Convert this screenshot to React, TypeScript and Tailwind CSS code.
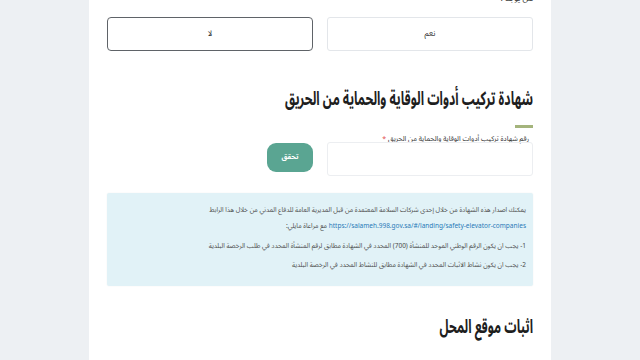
export default function App() {
  return (
    <div
      dir="rtl"
      className="w-[640px] h-[360px] overflow-hidden bg-[#edf0f3] flex justify-center"
      style={{ fontFamily: '"Noto Sans Arabic", "DejaVu Sans", sans-serif' }}
    >
      <div className="w-[462px] h-full bg-white px-[18px] flex flex-col">
        {/* question label, cut off by the top of the viewport */}
        <div className="-mt-[6px] h-[10px] text-[8px] text-[#333] leading-[10px]">
          هل يوجد ؟
        </div>

        <div className="mt-[13px] grid grid-cols-2 gap-[14px]">
          <button className="h-[34px] border border-[#e3e6ea] rounded-[3px] text-[8px] text-[#333]">
            نعم
          </button>
          <button className="h-[34px] border-[1.5px] border-[#5f6368] rounded-[4px] text-[8px] text-[#333]">
            لا
          </button>
        </div>

        <h2 className="mt-[34px] text-[19px] font-bold text-[#1e1e1e] leading-[28px] origin-right scale-x-[0.64] whitespace-nowrap">
          شهادة تركيب أدوات الوقاية والحماية من الحريق
        </h2>
        <div className="mt-[12px] w-[18px] h-[3px] bg-[#a4b47c]" />

        <div className="mt-[7px] grid grid-cols-2 gap-[14px]">
          <div className="flex flex-col">
            <div className="text-[7px] text-[#333] leading-[8px] pr-[4px]">
              رقم شهادة تركيب أدوات الوقاية والحماية من الحريق{" "}
              <span className="text-[#e24b4b]">*</span>
            </div>
            <div className="-mt-[1px] h-[34px] border border-[#eceef1] rounded-[3px]" />
          </div>
          <div className="flex items-end pb-[4px]">
            <button className="w-[46px] h-[29px] rounded-[9px] bg-[#5aa592] text-white text-[7px] font-bold">
              تحقق
            </button>
          </div>
        </div>

        <div className="mt-[17px] h-[93px] bg-[#e1f2f7] rounded-[2px] shadow-[0_0_2px_rgba(0,0,0,0.06)] px-[7px] pt-[12px] text-[6.5px] text-[#4a4a4a] leading-[10px]">
          <p>
            يمكنك اصدار هذه الشهادة من خلال إحدى شركات السلامة المعتمدة من قبل المديرية العامة للدفاع المدني من خلال هذا الرابط
          </p>
          <p className="mt-[6px]">
            <span className="text-[#2a7ab8]">https://salameh.998.gov.sa/#/landing/safety-elevator-companies</span>{" "}
            مع مراعاة مايلي:
          </p>
          <p className="mt-[10px]">
            1- يجب ان يكون الرقم الوطني الموحد للمنشأة (700) المحدد في الشهادة مطابق لرقم المنشأة المحدد في طلب الرخصة البلدية
          </p>
          <p className="mt-[9px]">
            2- يجب ان يكون نشاط الاثبات المحدد في الشهادة مطابق للنشاط المحدد في الرخصة البلدية
          </p>
        </div>

        <h2 className="mt-[27px] text-[19px] font-bold text-[#1e1e1e] leading-[28px] origin-right scale-x-[0.64] whitespace-nowrap">
          اثبات موقع المحل
        </h2>
      </div>
    </div>
  );
}
